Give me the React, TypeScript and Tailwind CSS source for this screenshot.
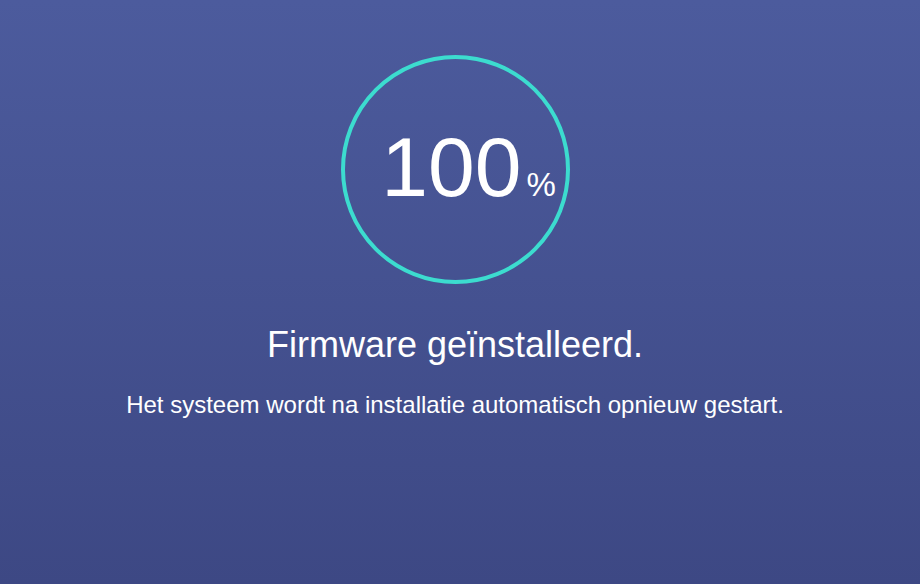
export default function App() {
  return (
    <div
      className="w-[920px] h-[584px] overflow-hidden flex flex-col items-center pr-[10px] bg-gradient-to-b from-[#4c5b9d] to-[#3d4884] text-white"
      style={{ fontFamily: '"Liberation Sans", Arial, sans-serif' }}
    >
      {/* progress ring */}
      <div className="mt-[55px] w-[229px] h-[229px] rounded-full border-[4px] border-[#3cdccf] flex items-center justify-center">
        <div className="flex items-baseline pl-[27px] pb-[6px]">
          <span className="text-[84px] leading-none">100</span>
          <span className="text-[33px] leading-none ml-[5px]">%</span>
        </div>
      </div>

      <h1 className="mt-[43px] text-[36px] leading-none">Firmware geïnstalleerd.</h1>
      <p className="mt-[30px] text-[24px] leading-none">
        Het systeem wordt na installatie automatisch opnieuw gestart.
      </p>
    </div>
  )
}
